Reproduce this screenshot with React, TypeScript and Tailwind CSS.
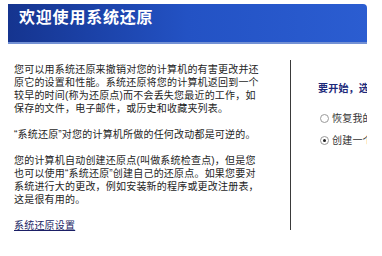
import React from "react";

const FONT = { fontFamily: '"Liberation Sans", "Noto Sans CJK SC", sans-serif' };

// 左栏说明文字，按原图逐行断开
const PARAS = [
  [
    "您可以用系统还原来撤销对您的计算机的有害更改并还",
    "原它的设置和性能。系统还原将您的计算机返回到一个",
    "较早的时间(称为还原点)而不会丢失您最近的工作，如",
    "保存的文件，电子邮件，或历史和收藏夹列表。",
  ],
  ["“系统还原”对您的计算机所做的任何改动都是可逆的。"],
  [
    "您的计算机自动创建还原点(叫做系统检查点)，但是您",
    "也可以使用“系统还原”创建自己的还原点。如果您要对",
    "系统进行大的更改，例如安装新的程序或更改注册表，",
    "这是很有用的。",
  ],
];

function Radio({ checked, label }: { checked?: boolean; label: string }) {
  return (
    <div className="flex items-center gap-[3px] whitespace-nowrap">
      <span className="w-[9px] h-[9px] rounded-full border border-[#9a9a9a] bg-white flex items-center justify-center shrink-0">
        {checked && <span className="w-[3px] h-[3px] rounded-full bg-[#222]" />}
      </span>
      <span className="text-[10px] leading-[13px] tracking-[0.2px] text-[#333]">{label}</span>
    </div>
  );
}

export default function App() {
  return (
    <div className="w-[382px] h-[256px] bg-white overflow-hidden" style={FONT}>
      <div className="w-[367px] h-full overflow-hidden">
        {/* 标题栏 */}
        <div className="ml-[8px] mt-[4px] h-[40px] rounded-tr-[4px] bg-gradient-to-r from-[#15348f] via-[#2352c4] to-[#2b5dd1] border-b-[2px] border-[#7391d4] pl-[11px] pt-[6px]">
          <h1 className="text-white font-bold text-[16px] leading-[16px] tracking-[0.8px]">
            欢迎使用系统还原
          </h1>
        </div>

        <div className="flex">
          {/* 左栏 */}
          <div className="w-[290px] shrink-0 pl-[14px] pt-[19px] text-[10px] leading-[13px] tracking-[0.2px] text-[#1e1e1e]">
            {PARAS.map((lines, i) => (
              <p key={i} className="mb-[13px] whitespace-nowrap">
                {lines.map((l) => (
                  <span key={l} className="block">
                    {l}
                  </span>
                ))}
              </p>
            ))}
            <a href="#" className="block mt-[1px] underline text-[#1b1f66] whitespace-nowrap">
              系统还原设置
            </a>
          </div>

          {/* 分隔线 */}
          <div className="mt-[16px] w-px h-[170px] bg-[#3a3a3a] shrink-0" />

          {/* 右栏 */}
          <div className="pl-[27px] pt-[38px] min-w-0">
            <div className="font-bold text-[10px] leading-[13px] tracking-[0.2px] text-[#1d2a7a] whitespace-nowrap">
              要开始，选择一项任务：
            </div>
            <div className="mt-[17px] flex flex-col gap-[9px] ml-[2px]">
              <Radio label="恢复我的计算机到一个较早的时间" />
              <Radio checked label="创建一个还原点" />
            </div>
          </div>
        </div>
      </div>
    </div>
  );
}
